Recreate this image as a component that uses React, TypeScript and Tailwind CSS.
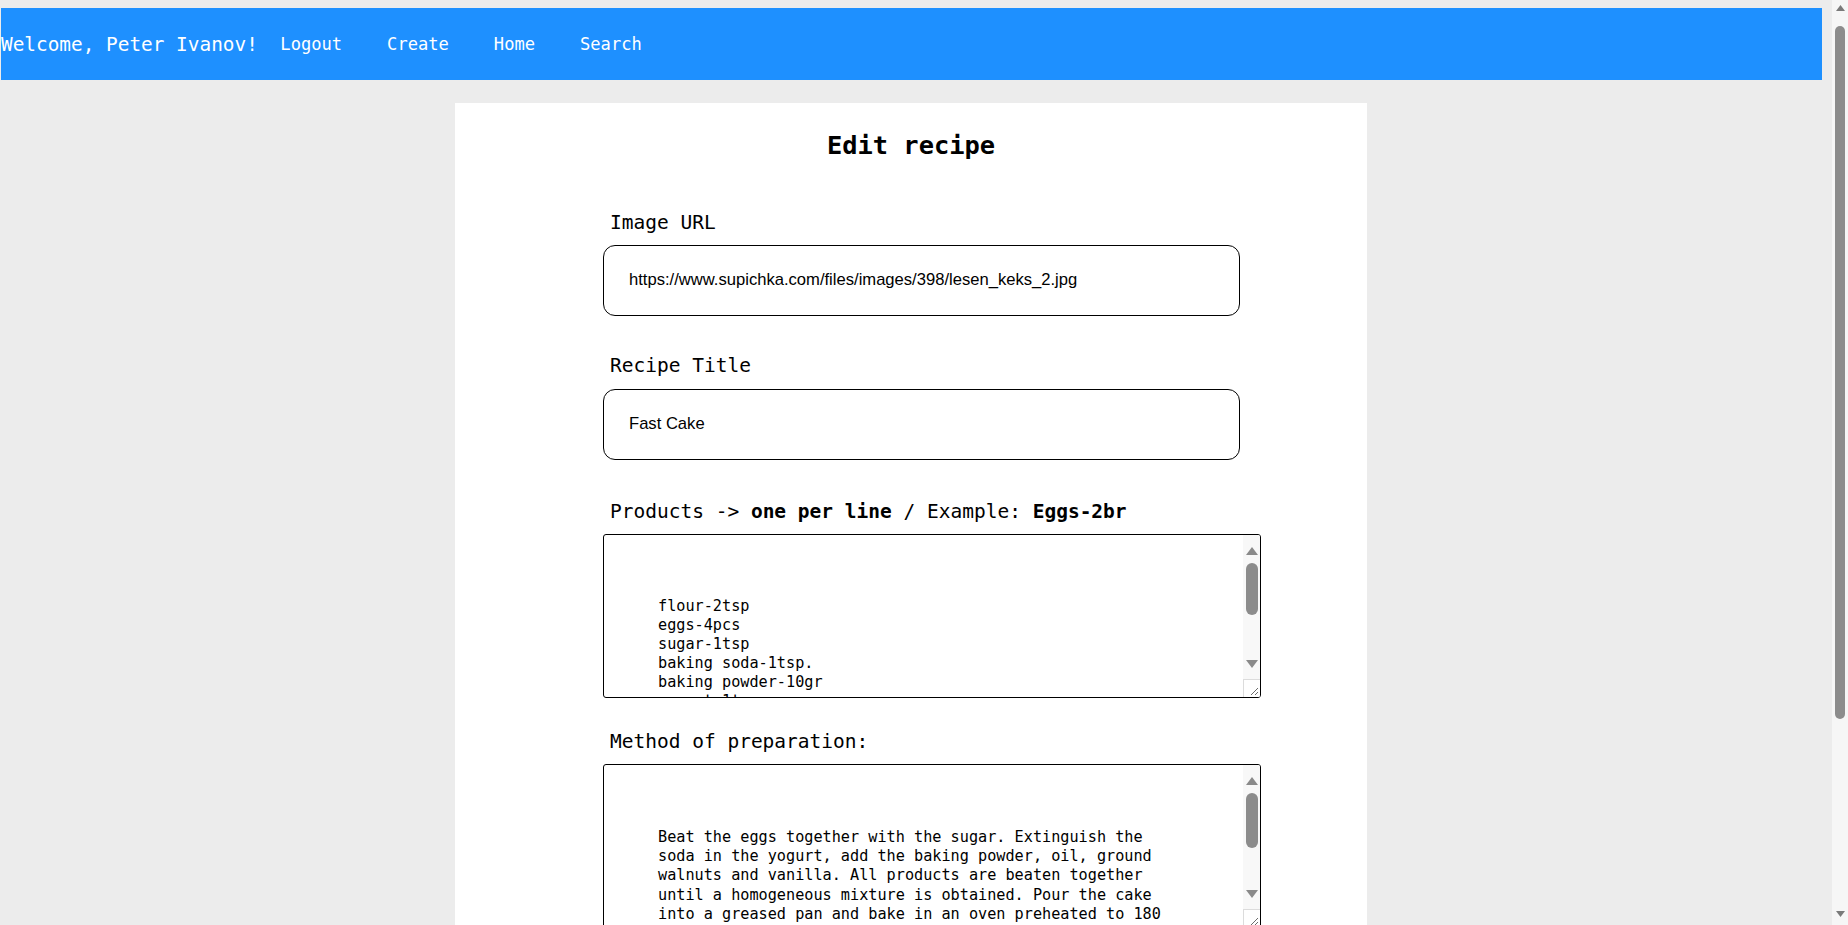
import React from "react";

const MONO = "font-['DejaVu_Sans_Mono',monospace]";

function UpArrow({ w = 11, h = 7, color = "#8a8a8a" }: { w?: number; h?: number; color?: string }) {
  return (
    <svg width={w} height={h} viewBox={`0 0 ${w} ${h}`}>
      <path d={`M${w / 2} 0 L${w} ${h} L0 ${h} Z`} fill={color} />
    </svg>
  );
}

function DownArrow({ w = 11, h = 7, color = "#8a8a8a" }: { w?: number; h?: number; color?: string }) {
  return (
    <svg width={w} height={h} viewBox={`0 0 ${w} ${h}`}>
      <path d={`M0 0 L${w} 0 L${w / 2} ${h} Z`} fill={color} />
    </svg>
  );
}

function FakeTextarea({ text, thumb, late }: { text: string; thumb: number; late?: boolean }) {
  return (
    <div className="w-[658px] h-[164px] border border-black rounded-[3px] overflow-hidden flex bg-white">
      <div
        className={`flex-1 min-w-0 pl-[54px] pr-[70px] whitespace-pre-wrap text-[15.2px] text-black ${MONO} ${
          late ? "pt-[63px] leading-[19.2px]" : "pt-[62px] leading-[19px]"
        }`}
      >
        {text}
      </div>
      <div className="w-[17px] h-full bg-[#f8f8f8] flex flex-col items-center">
        <div className="h-[28px] flex justify-center">
          <div className="mt-[12px] h-[8px] flex items-center">
            <UpArrow w={12} h={8} />
          </div>
        </div>
        <div className="w-[12px] rounded-full bg-[#8c8c8c]" style={{ height: thumb }} />
        <div className="flex-1" />
        <div className="h-[24px] flex justify-center">
          <div className="mt-[5px] h-[8px] flex items-center">
            <DownArrow w={12} h={8} />
          </div>
        </div>
        <div className="h-[18px] w-full border-t border-l border-[#dcdcdc] bg-white flex items-end justify-end">
          <svg width="10" height="10" viewBox="0 0 10 10" className="mb-[1px] mr-[1px]">
            <path d="M9 2 L2 9 M9 6 L6 9" stroke="#6b6b6b" strokeWidth="1" />
          </svg>
        </div>
      </div>
    </div>
  );
}

function Label({ children }: { children: React.ReactNode }) {
  return (
    <div className={`pl-[7px] h-[24px] leading-[24px] text-[19.5px] text-black ${MONO}`}>{children}</div>
  );
}

function TextInput({ value }: { value: string }) {
  return (
    <div className="w-[637px] h-[71px] border border-black rounded-[12px] pl-[25px] flex items-center bg-white">
      <span className="font-['Liberation_Sans',Arial,sans-serif] text-[16.6px] text-black">{value}</span>
    </div>
  );
}

const products = `flour-2tsp
eggs-4pcs
sugar-1tsp
baking soda-1tsp.
baking powder-10gr
yogurt-1tsp
oil-100ml
walnuts-100gr
vanilla-1pc`;

const method =
  "Beat the eggs together with the sugar. Extinguish the soda in the yogurt, add the baking powder, oil, ground walnuts and vanilla. All products are beaten together until a homogeneous mixture is obtained. Pour the cake into a greased pan and bake in an oven preheated to 180 degrees until ready.";

export default function App() {
  return (
    <div className="h-[925px] w-full flex overflow-hidden bg-[#ececec]">
      <div className="flex-1 min-w-0 overflow-hidden">
        <nav className={`mt-[8px] ml-[1px] mr-[10px] h-[72px] bg-[#1e90ff] flex items-center text-white ${MONO}`}>
          <span className="text-[19.4px] whitespace-pre pt-[1px]">Welcome, Peter Ivanov!</span>
          <a className="px-[22.5px] text-[17.1px] pt-[1px]">Logout</a>
          <a className="px-[22.5px] text-[17.1px] pt-[1px]">Create</a>
          <a className="px-[22.5px] text-[17.1px] pt-[1px]">Home</a>
          <a className="px-[22.5px] text-[17.1px] pt-[1px]">Search</a>
        </nav>
        <main className="ml-[455px] mt-[23px] w-[912px] bg-white pt-[26px] pb-[60px]">
          <h1 className={`text-center h-[32px] leading-[32px] text-[25.4px] font-bold text-black ${MONO}`}>
            Edit recipe
          </h1>
          <form className="ml-[148px] mt-[50px] flex flex-col">
            <Label>Image URL</Label>
            <div className="mt-[10px]">
              <TextInput value="https://www.supichka.com/files/images/398/lesen_keks_2.jpg" />
            </div>
            <div className="mt-[38px]">
              <Label>Recipe Title</Label>
            </div>
            <div className="mt-[11px]">
              <TextInput value="Fast Cake" />
            </div>
            <div className="mt-[40px]">
              <Label>
                {"Products -> "}
                <b>one per line</b>
                {" / Example: "}
                <b>Eggs-2br</b>
              </Label>
            </div>
            <div className="mt-[10px]">
              <FakeTextarea text={products} thumb={52} />
            </div>
            <div className="mt-[32px]">
              <Label>Method of preparation:</Label>
            </div>
            <div className="mt-[10px]">
              <FakeTextarea text={method} thumb={55} late />
            </div>
          </form>
        </main>
      </div>
      <div className="w-[16px] h-full bg-[#f6f6f6] flex flex-col items-center">
        <div className="h-[24px] flex justify-center">
          <div className="mt-[5px]">
            <UpArrow w={9} h={6} color="#7a7a7a" />
          </div>
        </div>
        <div className="w-[10px] h-[693px] rounded-full bg-[#8c8c8c] mt-[2px]" />
        <div className="flex-1" />
        <div className="h-[22px] flex justify-center">
          <div className="mt-[8px]">
            <DownArrow w={9} h={6} color="#7a7a7a" />
          </div>
        </div>
      </div>
    </div>
  );
}
